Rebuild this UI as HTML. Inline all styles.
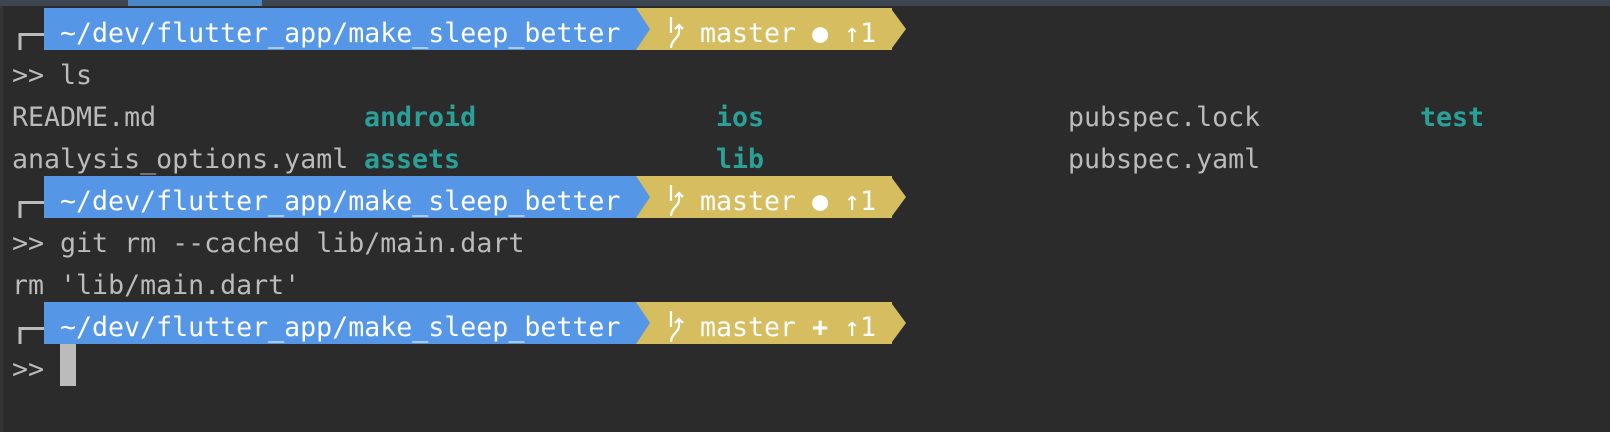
<!DOCTYPE html>
<html><head><meta charset="utf-8"><style>
html,body{margin:0;padding:0}
body{width:1610px;height:432px;background:#2b2b2b;position:relative;overflow:hidden;font-family:"DejaVu Sans Mono","Liberation Mono",monospace;font-size:26.6px;color:#bbbbbb}
.top{position:absolute;left:0;top:0;width:1610px;height:6px;background:#3c4550}
.tab{position:absolute;left:128px;top:0;width:134px;height:6px;background:#4a88c7}
.lb{position:absolute;left:0;top:6px;width:3px;height:426px;background:#353535}
.t{position:absolute;height:42px;line-height:52px;white-space:pre}
.c{color:#2aa198;font-weight:bold}
.bar{position:absolute;left:0;height:42px;width:920px}
.blue{position:absolute;left:44px;top:0;width:592px;height:42px;background:#5596e6;color:#fff;line-height:52px;white-space:pre;overflow:hidden}
.yel{position:absolute;left:636px;top:0;width:256px;height:42px;background:#d6bd5f;color:#fff;line-height:52px;white-space:pre;overflow:hidden}
</style></head><body>
<div class="top"></div><div class="tab"></div><div class="lb"></div>

<div class="bar" style="top:8px">
 <svg width="920" height="42" style="position:absolute;left:0;top:0">
  <path d="M20 42 V26.5 H44" stroke="#bbb" stroke-width="3" fill="none"/>
 </svg>
 <div class="yel"><span style="position:absolute;left:64px">master ● ↑1</span></div>
 <svg width="920" height="42" style="position:absolute;left:0;top:0">
  <polygon points="636,0 650,21 636,42" fill="#5596e6"/>
  <polygon points="892,2 906,21 892,40" fill="#d6bd5f"/>
  <path d="M671 9 V25 M671 40 C671 32 679 30 679 24 V17 M675 21 L679 17 L683 21" stroke="#fff" stroke-width="2.2" fill="none"/>
 </svg>
 <div class="blue"> ~/dev/flutter_app/make_sleep_better</div>
</div>

<div class="t" style="left:12px;top:50px">&gt;&gt; ls</div>
<div class="t" style="left:12px;top:92px">README.md</div>
<div class="t c" style="left:364px;top:92px">android</div>
<div class="t c" style="left:716px;top:92px">ios</div>
<div class="t" style="left:1068px;top:92px">pubspec.lock</div>
<div class="t c" style="left:1420px;top:92px">test</div>
<div class="t" style="left:12px;top:134px">analysis_options.yaml</div>
<div class="t c" style="left:364px;top:134px">assets</div>
<div class="t c" style="left:716px;top:134px">lib</div>
<div class="t" style="left:1068px;top:134px">pubspec.yaml</div>

<div class="bar" style="top:176px">
 <svg width="920" height="42" style="position:absolute;left:0;top:0">
  <path d="M20 42 V26.5 H44" stroke="#bbb" stroke-width="3" fill="none"/>
 </svg>
 <div class="yel"><span style="position:absolute;left:64px">master ● ↑1</span></div>
 <svg width="920" height="42" style="position:absolute;left:0;top:0">
  <polygon points="636,0 650,21 636,42" fill="#5596e6"/>
  <polygon points="892,2 906,21 892,40" fill="#d6bd5f"/>
  <path d="M671 9 V25 M671 40 C671 32 679 30 679 24 V17 M675 21 L679 17 L683 21" stroke="#fff" stroke-width="2.2" fill="none"/>
 </svg>
 <div class="blue"> ~/dev/flutter_app/make_sleep_better</div>
</div>

<div class="t" style="left:12px;top:218px">&gt;&gt; git rm --cached lib/main.dart</div>
<div class="t" style="left:12px;top:260px">rm 'lib/main.dart'</div>

<div class="bar" style="top:302px">
 <svg width="920" height="42" style="position:absolute;left:0;top:0">
  <path d="M20 42 V26.5 H44" stroke="#bbb" stroke-width="3" fill="none"/>
 </svg>
 <div class="yel"><span style="position:absolute;left:64px">master <b>+</b> ↑1</span></div>
 <svg width="920" height="42" style="position:absolute;left:0;top:0">
  <polygon points="636,0 650,21 636,42" fill="#5596e6"/>
  <polygon points="892,2 906,21 892,40" fill="#d6bd5f"/>
  <path d="M671 9 V25 M671 40 C671 32 679 30 679 24 V17 M675 21 L679 17 L683 21" stroke="#fff" stroke-width="2.2" fill="none"/>
 </svg>
 <div class="blue"> ~/dev/flutter_app/make_sleep_better</div>
</div>

<div class="t" style="left:12px;top:344px">&gt;&gt;</div>
<div style="position:absolute;left:60px;top:344px;width:16px;height:42px;background:#bbbbbb"></div>
</body></html>
